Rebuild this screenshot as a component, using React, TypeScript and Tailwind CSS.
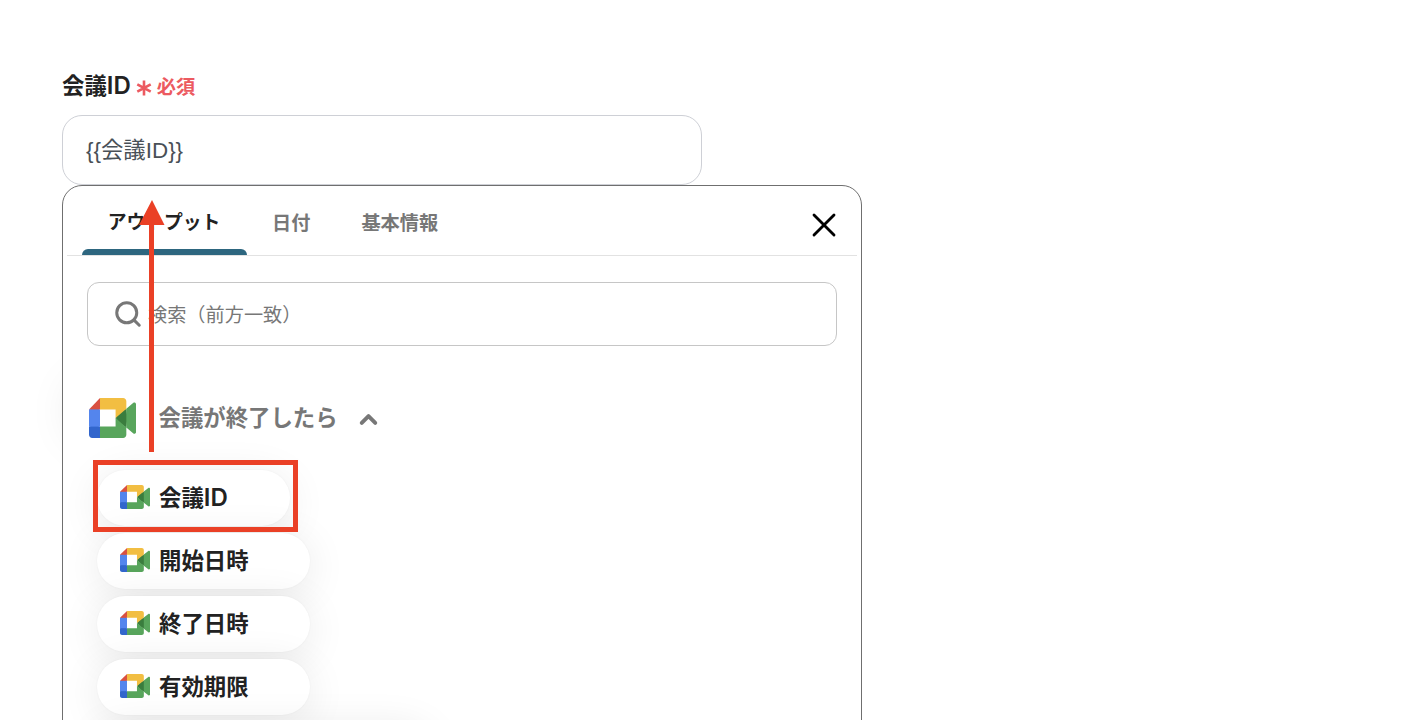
import { ChevronUp, Search, X } from 'lucide-react'

interface OutputItem {
  label: string
  width: string
}

const TABS = ['アウトプット', '日付', '基本情報']

const OUTPUTS: OutputItem[] = [
  { label: '会議ID', width: 'w-[193px]' },
  { label: '開始日時', width: 'w-[213px]' },
  { label: '終了日時', width: 'w-[213px]' },
  { label: '有効期限', width: 'w-[213px]' },
]

export default function App() {
  return (
    <main className="relative h-[720px] w-full overflow-hidden bg-white px-[62px] pt-[70px] font-['Inter','Noto_Sans_CJK_JP',sans-serif] text-[#222]">
      <label className="flex h-8 items-center text-[22.4px] leading-8 font-bold whitespace-nowrap">
        <span>
          会議<span className="text-[24px] leading-none font-semibold">ID</span>
        </span>
        <RequiredMark />
        <span className="mt-0.5 ml-[5px] text-[19.2px] text-[#ec5a60]">必須</span>
      </label>

      <div className="mt-[13px] flex h-[70px] w-[640px] items-center rounded-[20px] border border-[#ced0d6] px-[23px] pt-0.5 font-['Liberation_Sans','Noto_Sans_CJK_JP',sans-serif] text-[22.4px] text-[#495057]">
        {'{{会議ID}}'}
      </div>

      <OutputPanel />
      <Annotation />
    </main>
  )
}

function OutputPanel() {
  return (
    <div className="relative w-[800px]">
      <div className="absolute top-[198px] left-[12px] h-[56px] w-[200px] rounded-full shadow-[0_0_48px_rgba(0,40,20,0.13)]" />
      <section className="relative h-[620px] rounded-t-[20px] border border-[#6f6f6f] bg-white">
        <header className="mx-1 flex h-[70px] border-b border-[#e2e2e2] pl-[15px]">
          {TABS.map((tab, index) => (
            <button
              className={
                index === 0
                  ? 'relative w-[165px] pt-[5px] pr-px text-[18.8px] font-bold text-[#222]'
                  : 'ml-[25px] pr-[26px] pt-[5px] text-[19.2px] font-bold text-[#777]'
              }
              key={tab}
              type="button"
            >
              {tab}
              {index === 0 && (
                <span className="absolute bottom-0 left-0 h-1.5 w-full rounded-t-md bg-[#2d667f]" />
              )}
            </button>
          ))}
          <button
            aria-label="閉じる"
            className="mt-[19px] mr-[13px] ml-auto h-10 text-black"
            type="button"
          >
            <X size={40} strokeWidth={1.7} />
          </button>
        </header>

        <div className="mx-6 mt-[26px] flex h-16 items-center rounded-xl border border-[#c6c6c6] pl-[25px] text-[#777]">
          <Search size={30} strokeWidth={2.4} />
          <span className="mt-[3px] ml-[5px] text-[19.2px]">
            検索（前方一致）
          </span>
        </div>

        <div className="mt-[52px] ml-[26px] flex h-10 items-center text-[22.4px] font-bold text-[#777]">
          <MeetLogo className="h-10 w-[47px]" />
          <span className="ml-[22.5px]">会議が終了したら</span>
          <ChevronUp className="mt-0.5 ml-[17.5px]" size={27} strokeWidth={3.5} />
        </div>

        <ul className="mt-8 ml-[34px] flex flex-col items-start gap-[7px]">
          {OUTPUTS.map((item) => (
            <li
              className={`flex h-14 items-center rounded-full bg-white pl-[23px] text-[22.4px] font-bold shadow-[0_0_2px_rgba(0,0,0,0.05),0_6px_42px_rgba(0,0,0,0.09)] ${item.width}`}
              key={item.label}
            >
              <MeetLogo className="mb-0.5 h-6 w-[30px]" />
              <span className="ml-[9px]">
                {item.label.replace('ID', '')}
                {item.label.endsWith('ID') && (
                  <span className="text-[24px] leading-none font-semibold">
                    ID
                  </span>
                )}
              </span>
            </li>
          ))}
          <li className="h-14 w-[335px] rounded-full bg-white shadow-[0_0_2px_rgba(0,0,0,0.05),0_6px_42px_rgba(0,0,0,0.09)]" />
        </ul>
      </section>
    </div>
  )
}

function RequiredMark() {
  return (
    <svg
      className="mt-1 ml-[5px] h-4 w-4"
      fill="none"
      stroke="#ec5a60"
      strokeWidth="2.6"
      viewBox="0 0 16 16"
    >
      <path d="M8 .5v15M1.3 4.3l13.4 7.4M14.7 4.3l-13.4 7.4" />
    </svg>
  )
}

function MeetLogo({ className }: { className: string }) {
  return (
    <svg className={className} preserveAspectRatio="none" viewBox="0 0 87.5 72">
      <path
        d="M49.5 36l8.53 9.75 11.47 7.33 2-17.02-2-16.64-11.69 6.44z"
        fill="#3a7d3e"
      />
      <path
        d="M0 51.5V66c0 3.315 2.685 6 6 6h14.5l3-10.96-3-9.54-9.95-3z"
        fill="#3266cc"
      />
      <path d="M20.5 0L0 20.5l10.55 3 9.95-3 2.95-9.41z" fill="#d95040" />
      <path d="M20.5 20.5H0v31h20.5z" fill="#5485ed" />
      <path
        d="M82.6 8.68L69.5 19.42v33.66l13.16 10.79c1.97 1.54 4.85.135 4.85-2.37V11c0-2.535-2.945-3.925-4.91-2.32zM49.5 36v15.5h-29V72h43c3.315 0 6-2.685 6-6V53.08z"
        fill="#58a55c"
      />
      <path
        d="M63.5 0h-43v20.5h29V36l20-16.57V6c0-3.315-2.685-6-6-6z"
        fill="#f2be42"
      />
    </svg>
  )
}

// Arrow from the selected output up to the input field
function Annotation() {
  return (
    <>
      <svg
        className="absolute top-[200px] left-[139px] h-[252px] w-[26px]"
        fill="#ea4026"
        viewBox="0 0 26 252"
      >
        <path d="M13 0l12.5 25H15v227h-5V25H0z" />
      </svg>
      <div className="absolute top-[460px] left-[93px] h-[72px] w-[205px] border-5 border-[#ea4026]" />
    </>
  )
}
